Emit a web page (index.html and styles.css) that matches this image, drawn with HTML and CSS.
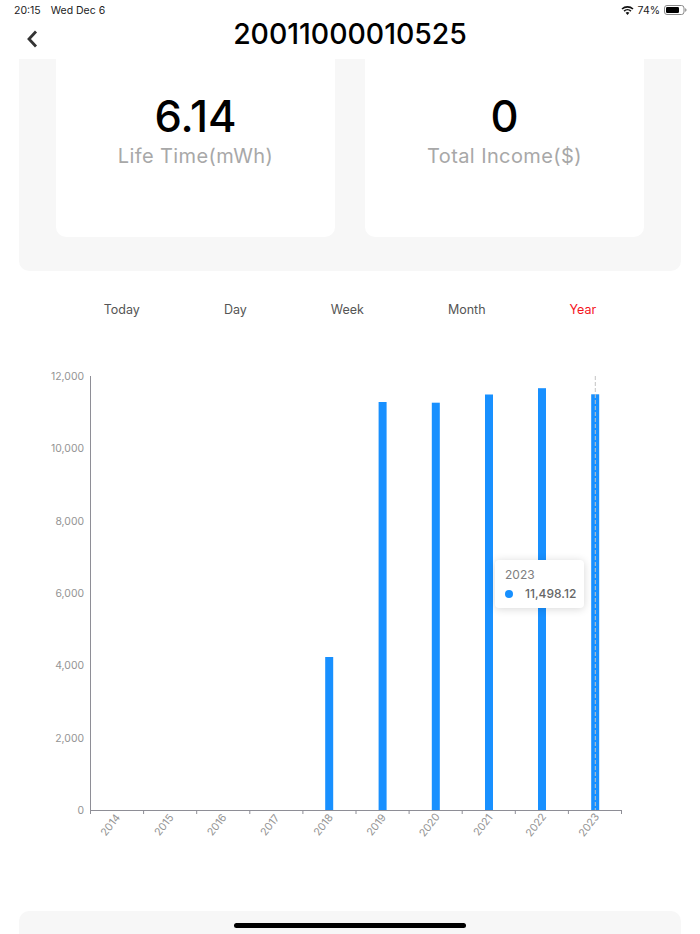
FILE: index.html
```html
<!DOCTYPE html>
<html lang="en">
<head>
<meta charset="utf-8">
<title>20011000010525</title>
<link rel="stylesheet" href="styles.css">
</head>
<body>
<div class="page">
  <div class="status">
    <div class="status-left"><span>20:15</span><span>Wed Dec 6</span></div>
    <div class="status-right">
      <svg class="wifi" width="13" height="9" viewBox="0 0 14 10"><path d="M7 10 4.9 7.6a3 3 0 0 1 4.2 0Z M3.8 6.4 2.6 5.1a6.4 6.4 0 0 1 8.8 0L10.2 6.4a4.6 4.6 0 0 0-6.4 0Z M1.5 4 .3 2.7a9.8 9.8 0 0 1 13.4 0L12.5 4a8 8 0 0 0-11 0Z" fill="#111"/></svg>
      <span>74%</span>
      <svg class="batt" width="23" height="10" viewBox="0 0 23 10"><rect x=".5" y=".5" width="19.5" height="9" rx="2.5" fill="none" stroke="#888"/><rect x="2" y="2" width="13" height="6" rx="1.2" fill="#000"/><path d="M21.2 3.3c.9.3 1.3 1 1.3 1.7s-.4 1.4-1.3 1.7Z" fill="#888"/></svg>
    </div>
  </div>
  <header class="nav">
    <svg class="back" width="12" height="20" viewBox="0 0 12 20"><path d="M10 2.5 3 10l7 7.5" fill="none" stroke="#333" stroke-width="2.8"/></svg>
    <h1 class="title">20011000010525</h1>
  </header>
  <section class="panel">
    <div class="card">
      <div class="value">6.14</div>
      <div class="label">Life Time(mWh)</div>
    </div>
    <div class="card">
      <div class="value">0</div>
      <div class="label">Total Income($)</div>
    </div>
  </section>
  <nav class="tabs">
    <span class="tab">Today</span>
    <span class="tab">Day</span>
    <span class="tab">Week</span>
    <span class="tab">Month</span>
    <span class="tab tab-active">Year</span>
  </nav>
  <div class="chart">
    <svg class="plot" width="700" height="480" viewBox="0 360 700 480">
      <g class="bars">
        <rect x="325.2" y="657" width="8" height="153"/>
        <rect x="378.6" y="402" width="8" height="408"/>
        <rect x="431.8" y="402.7" width="8" height="407.3"/>
        <rect x="485" y="394.5" width="8" height="415.5"/>
        <rect x="538" y="388.2" width="8" height="421.8"/>
        <rect x="591.2" y="394.3" width="8" height="415.7"/>
      </g>
      <line class="pointer" x1="595.3" y1="376" x2="595.3" y2="810"/>
      <path class="axis" d="M90.5 376V810.5H621.5 M90.5 810V814 M143.6 810V814 M196.7 810V814 M249.8 810V814 M302.9 810V814 M356 810V814 M409.1 810V814 M462.2 810V814 M515.3 810V814 M568.4 810V814 M621.5 810V814"/>
      <g class="ylabels">
        <text x="84" y="380">12,000</text>
        <text x="84" y="452">10,000</text>
        <text x="84" y="524.5">8,000</text>
        <text x="84" y="597">6,000</text>
        <text x="84" y="669">4,000</text>
        <text x="84" y="741.5">2,000</text>
        <text x="84" y="814">0</text>
      </g>
      <g class="xlabels">
        <text transform="translate(110.5 825) rotate(-52)" y="3.5">2014</text>
        <text transform="translate(164 825) rotate(-52)" y="3.5">2015</text>
        <text transform="translate(217 825) rotate(-52)" y="3.5">2016</text>
        <text transform="translate(270 825) rotate(-52)" y="3.5">2017</text>
        <text transform="translate(323.3 825) rotate(-52)" y="3.5">2018</text>
        <text transform="translate(376.5 825) rotate(-52)" y="3.5">2019</text>
        <text transform="translate(429.5 825) rotate(-52)" y="3.5">2020</text>
        <text transform="translate(483 825) rotate(-52)" y="3.5">2021</text>
        <text transform="translate(536 825) rotate(-52)" y="3.5">2022</text>
        <text transform="translate(589 825) rotate(-52)" y="3.5">2023</text>
      </g>
    </svg>
    <div class="tooltip">
      <div class="tip-year">2023</div>
      <div class="tip-row"><span class="tip-dot"></span><span class="tip-val">11,498.12</span></div>
    </div>
  </div>
  <footer class="footer"></footer>
  <div class="home"></div>
</div>
</body>
</html>
```

FILE: styles.css
```css
* { box-sizing: border-box; }
html, body { margin: 0; padding: 0; background: #fff; }
body { font-family: Inter, "Liberation Sans", sans-serif; }
.page { position: relative; width: 700px; height: 934px; overflow: hidden; }

.status { height: 20px; padding: 0 13px 0 14px; display: flex; justify-content: space-between; align-items: center; font-size: 10.5px; color: #222; }
.status-left { display: flex; gap: 10px; }
.status-right { display: flex; align-items: center; gap: 4px; }

.nav { position: relative; height: 39px; display: flex; justify-content: center; align-items: flex-start; }
.back { position: absolute; left: 26px; top: 9px; }
.title { margin: 0; font-size: 28.4px; font-weight: 500; line-height: 28px; color: #000; }

.panel { margin: 0 19px; height: 212px; padding: 0 37px; display: flex; gap: 30px; background: #f7f7f7; border-radius: 0 0 10px 10px; }
.card { width: 279px; height: 178px; padding-top: 35px; background: #fff; border-radius: 0 0 10px 10px; text-align: center; }
.value { font-size: 43.5px; font-weight: 500; line-height: 44px; color: #000; }
.label { margin-top: 5px; font-size: 20px; letter-spacing: .4px; line-height: 26px; color: #a8a8a8; }

.tabs { margin-top: 29px; height: 20px; display: flex; justify-content: center; gap: 84px; font-size: 12.5px; line-height: 20px; color: #555; }
.tab-active { color: #f5141e; }

.chart { position: relative; margin-top: 40px; height: 480px; }
.plot { display: block; }
.bars rect { fill: #1890ff; }
.pointer { stroke: #c4c4c4; stroke-dasharray: 4 2; }
.axis { fill: none; stroke: #8e8e96; stroke-width: 1; }
.ylabels text { font-size: 10.4px; fill: #949494; text-anchor: end; }
.xlabels text { font-size: 10.6px; fill: #949494; text-anchor: middle; }

.tooltip { position: absolute; left: 495px; top: 200px; width: 89px; height: 48px; padding: 7px 10px; background: #fff; border-radius: 4px; box-shadow: 0 1px 8px rgba(0,0,0,.16); font-size: 12px; color: #666; }
.tip-year { line-height: 16px; color: #808080; }
.tip-row { margin-top: 3px; display: flex; align-items: center; gap: 12px; line-height: 16px; font-weight: 500; }
.tip-dot { width: 8px; height: 8px; border-radius: 50%; background: #1890ff; flex: none; }

.footer { margin: 71px 19px 0; height: 23px; background: #f7f7f7; border-radius: 10px 10px 0 0; }
.home { position: absolute; left: 234px; top: 923px; width: 232px; height: 5px; border-radius: 3px; background: #000; }
```
